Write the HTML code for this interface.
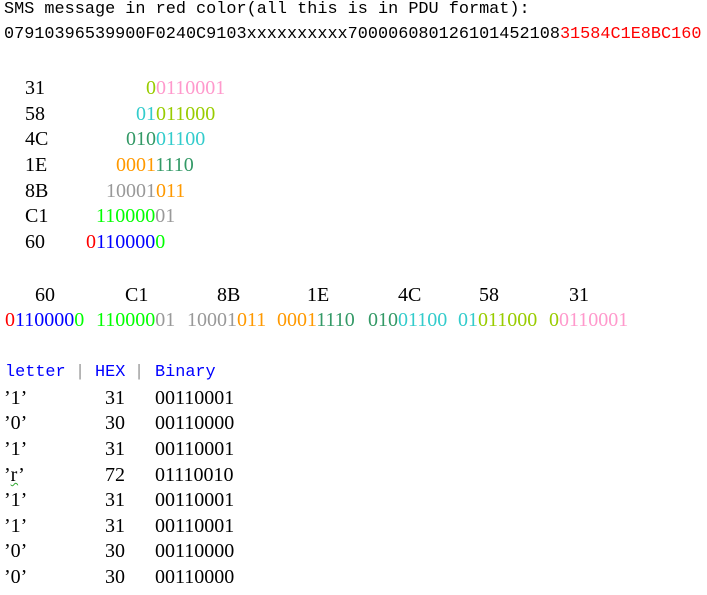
<!DOCTYPE html>
<html><head><meta charset="utf-8"><style>
body{margin:0;background:#fff;width:707px;height:595px;position:relative;overflow:hidden;color:#000}
.m{position:absolute;font-family:"Liberation Mono",monospace;font-size:16.85px;line-height:20px;white-space:pre}
.s{position:absolute;font-family:"Liberation Serif",serif;font-size:20px;line-height:22px;white-space:pre}
.o{color:#99cc00}.p{color:#ff99cc}.c{color:#33cccc}.t{color:#339966}.or{color:#ff9900}.g{color:#999999}.l{color:#00ff00}.r{color:#ff0000}.b{color:#0000ff}
</style></head><body>
<div class="m" style="left:4px;top:0px">SMS message in red color(all this is in PDU format):</div>
<div class="m" style="left:4px;top:25px">07910396539900F0240C9103xxxxxxxxxx700006080126101452108<span class="r">31584C1E8BC160</span></div>

<div class="s" style="left:25px;top:77px">31</div><div class="s" style="left:146px;top:77px"><span class="o">0</span><span class="p">0110001</span></div>
<div class="s" style="left:25px;top:103px">58</div><div class="s" style="left:136px;top:103px"><span class="c">01</span><span class="o">011000</span></div>
<div class="s" style="left:25px;top:128px">4C</div><div class="s" style="left:126px;top:128px"><span class="t">010</span><span class="c">01100</span></div>
<div class="s" style="left:25px;top:154px">1E</div><div class="s" style="left:116px;top:154px"><span class="or">0001</span><span class="t">1110</span></div>
<div class="s" style="left:25px;top:180px">8B</div><div class="s" style="left:106px;top:180px"><span class="g">10001</span><span class="or">011</span></div>
<div class="s" style="left:25px;top:205px">C1</div><div class="s" style="left:96px;top:205px"><span class="l">110000</span><span class="g">01</span></div>
<div class="s" style="left:25px;top:231px">60</div><div class="s" style="left:86px;top:231px"><span class="r">0</span><span class="b">110000</span><span class="l">0</span></div>

<div class="s" style="left:35px;top:284px">60</div>
<div class="s" style="left:125px;top:284px">C1</div>
<div class="s" style="left:217px;top:284px">8B</div>
<div class="s" style="left:307px;top:284px">1E</div>
<div class="s" style="left:398px;top:284px">4C</div>
<div class="s" style="left:479px;top:284px">58</div>
<div class="s" style="left:569px;top:284px">31</div>

<div class="s" style="left:5px;top:309px"><span class="r">0</span><span class="b">110000</span><span class="l">0</span></div>
<div class="s" style="left:96px;top:309px"><span class="l">110000</span><span class="g">01</span></div>
<div class="s" style="left:187px;top:309px"><span class="g">10001</span><span class="or">011</span></div>
<div class="s" style="left:277px;top:309px"><span class="or">0001</span><span class="t">1110</span></div>
<div class="s" style="left:368px;top:309px"><span class="t">010</span><span class="c">01100</span></div>
<div class="s" style="left:458px;top:309px"><span class="c">01</span><span class="o">011000</span></div>
<div class="s" style="left:549px;top:309px"><span class="o">0</span><span class="p">0110001</span></div>

<div class="m b" style="left:5px;top:363px">letter</div>
<div class="m g" style="left:75px;top:363px">|</div>
<div class="m b" style="left:95px;top:363px">HEX</div>
<div class="m g" style="left:134px;top:363px">|</div>
<div class="m b" style="left:155px;top:363px">Binary</div>

<div class="s" style="left:4px;top:387px">’1’</div><div class="s" style="left:105px;top:387px">31</div><div class="s" style="left:155px;top:387px">00110001</div>
<div class="s" style="left:4px;top:412px">’0’</div><div class="s" style="left:105px;top:412px">30</div><div class="s" style="left:155px;top:412px">00110000</div>
<div class="s" style="left:4px;top:438px">’1’</div><div class="s" style="left:105px;top:438px">31</div><div class="s" style="left:155px;top:438px">00110001</div>
<div class="s" style="left:4px;top:464px">’<span style="text-decoration:underline wavy #33aa33;text-decoration-thickness:1px">r</span>’</div><div class="s" style="left:105px;top:464px">72</div><div class="s" style="left:155px;top:464px">01110010</div>
<div class="s" style="left:4px;top:489px">’1’</div><div class="s" style="left:105px;top:489px">31</div><div class="s" style="left:155px;top:489px">00110001</div>
<div class="s" style="left:4px;top:515px">’1’</div><div class="s" style="left:105px;top:515px">31</div><div class="s" style="left:155px;top:515px">00110001</div>
<div class="s" style="left:4px;top:540px">’0’</div><div class="s" style="left:105px;top:540px">30</div><div class="s" style="left:155px;top:540px">00110000</div>
<div class="s" style="left:4px;top:566px">’0’</div><div class="s" style="left:105px;top:566px">30</div><div class="s" style="left:155px;top:566px">00110000</div>
</body></html>
